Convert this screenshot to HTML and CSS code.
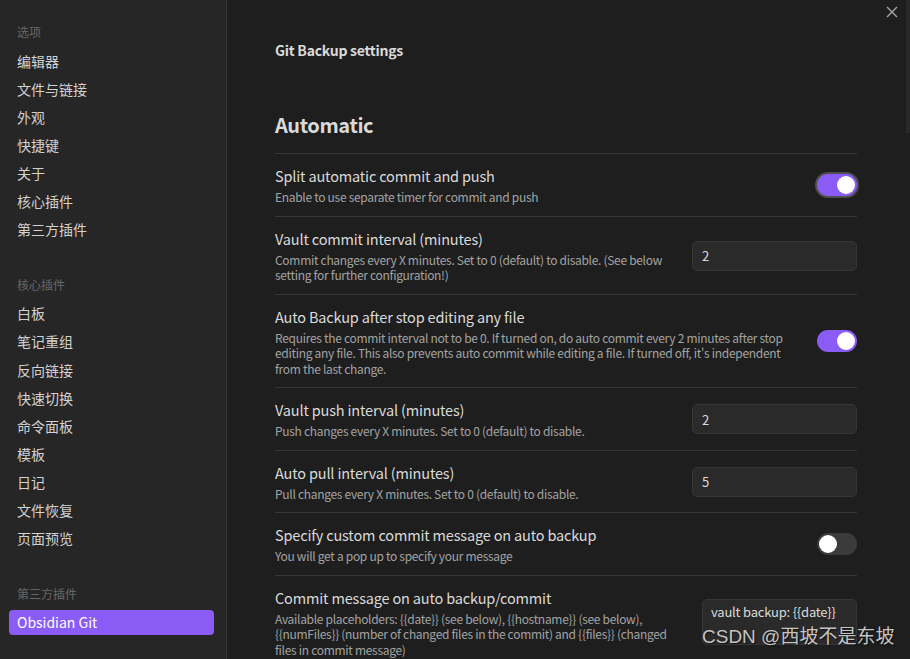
FILE: index.html
```html
<!DOCTYPE html>
<html lang="zh-CN">
<head>
<meta charset="utf-8">
<title>Git Backup settings</title>
<link rel="stylesheet" href="styles.css">
</head>
<body>
<div class="app">
  <nav class="sidebar">
    <div class="nav-group">
      <div class="nav-header">选项</div>
      <div class="nav-item">编辑器</div>
      <div class="nav-item">文件与链接</div>
      <div class="nav-item">外观</div>
      <div class="nav-item">快捷键</div>
      <div class="nav-item">关于</div>
      <div class="nav-item">核心插件</div>
      <div class="nav-item">第三方插件</div>
    </div>
    <div class="nav-group">
      <div class="nav-header">核心插件</div>
      <div class="nav-item">白板</div>
      <div class="nav-item">笔记重组</div>
      <div class="nav-item">反向链接</div>
      <div class="nav-item">快速切换</div>
      <div class="nav-item">命令面板</div>
      <div class="nav-item">模板</div>
      <div class="nav-item">日记</div>
      <div class="nav-item">文件恢复</div>
      <div class="nav-item">页面预览</div>
    </div>
    <div class="nav-group">
      <div class="nav-header">第三方插件</div>
      <div class="nav-item active">Obsidian Git</div>
    </div>
  </nav>

  <main class="main">
    <h2 class="title">Git Backup settings</h2>
    <h3 class="heading">Automatic</h3>

    <div class="item">
      <div class="info">
        <div class="name">Split automatic commit and push</div>
        <div class="desc">Enable to use separate timer for commit and push</div>
      </div>
      <div class="control"><div class="toggle on focus"></div></div>
    </div>

    <div class="item">
      <div class="info">
        <div class="name">Vault commit interval (minutes)</div>
        <div class="desc">Commit changes every X minutes. Set to 0 (default) to disable. (See below setting for further configuration!)</div>
      </div>
      <div class="control"><input class="text-input" type="text" value="2"></div>
    </div>

    <div class="item">
      <div class="info">
        <div class="name">Auto Backup after stop editing any file</div>
        <div class="desc">Requires the commit interval not to be 0. If turned on, do auto commit every 2 minutes after stop editing any file. This also prevents auto commit while editing a file. If turned off, it's independent from the last change.</div>
      </div>
      <div class="control"><div class="toggle on"></div></div>
    </div>

    <div class="item">
      <div class="info">
        <div class="name">Vault push interval (minutes)</div>
        <div class="desc">Push changes every X minutes. Set to 0 (default) to disable.</div>
      </div>
      <div class="control"><input class="text-input" type="text" value="2"></div>
    </div>

    <div class="item">
      <div class="info">
        <div class="name">Auto pull interval (minutes)</div>
        <div class="desc">Pull changes every X minutes. Set to 0 (default) to disable.</div>
      </div>
      <div class="control"><input class="text-input" type="text" value="5"></div>
    </div>

    <div class="item">
      <div class="info">
        <div class="name">Specify custom commit message on auto backup</div>
        <div class="desc">You will get a pop up to specify your message</div>
      </div>
      <div class="control"><div class="toggle"></div></div>
    </div>

    <div class="item">
      <div class="info">
        <div class="name">Commit message on auto backup/commit</div>
        <div class="desc">Available placeholders: {{date}} (see below), {{hostname}} (see below), {{numFiles}} (number of changed files in the commit) and {{files}} (changed files in commit message)</div>
      </div>
      <div class="control"><textarea class="text-area">vault backup: {{date}}</textarea></div>
    </div>

    <button class="close" aria-label="Close">
      <svg width="12" height="12" viewBox="0 0 12 12"><path d="M1 1 L11 11 M11 1 L1 11" stroke="#a6a6a6" stroke-width="1.4" fill="none"/></svg>
    </button>
    <div class="scroll-thumb"></div>
  </main>

  <div class="watermark">CSDN @西坡不是东坡</div>
</div>
</body>
</html>
```

FILE: styles.css
```css
html, body {
  margin: 0;
  padding: 0;
}

body {
  background: #1e1e1e;
  font-family: "Noto Sans CJK SC", "Noto Sans", sans-serif;
  color: #dadada;
  overflow: hidden;
}

.app {
  display: flex;
  height: 659px;
  position: relative;
  overflow: hidden;
}

/* Sidebar */
.sidebar {
  width: 227px;
  flex: none;
  box-sizing: border-box;
  background: #262626;
  border-right: 1px solid #363636;
  padding: 24px 12px 0 9px;
}

.nav-group + .nav-group {
  margin-top: 34.5px;
}

.nav-header {
  font-size: 12px;
  line-height: 16px;
  color: #666666;
  padding-left: 8px;
  margin-bottom: 8.5px;
}

.nav-item {
  font-size: 14px;
  line-height: 25px;
  height: 25px;
  padding: 0 8px;
  margin-bottom: 3.15px;
  color: #d2d2d2;
  border-radius: 4px;
}

.nav-item.active {
  background: #8a5cf5;
  color: #ffffff;
}

/* Main */
.main {
  flex: 1;
  position: relative;
  padding: 40px 53px 0 48px;
  min-width: 0;
}

.title {
  margin: 0;
  font-size: 14px;
  font-weight: 600;
  line-height: 20px;
  letter-spacing: -0.25px;
  color: #dadada;
}

.heading {
  margin: 51px 0 14px;
  font-size: 20px;
  font-weight: 600;
  line-height: 28px;
  letter-spacing: -0.4px;
  color: #dadada;
}

.item {
  display: flex;
  align-items: center;
  border-top: 1px solid #363636;
  padding: 12px 0 11px;
}

.info {
  flex: 1;
  min-width: 0;
  margin-right: 16px;
}

.name {
  font-size: 14.5px;
  line-height: 20px;
  letter-spacing: -0.17px;
  color: #dadada;
}

.desc {
  font-size: 12px;
  line-height: 15.5px;
  letter-spacing: -0.3px;
  color: #a3a3a3;
  margin-top: 3px;
}

.control {
  flex: none;
  display: flex;
  justify-content: flex-end;
}

.toggle {
  position: relative;
  width: 40px;
  height: 22px;
  border-radius: 11px;
  background: #3b3b3b;
}

.toggle::after {
  content: "";
  position: absolute;
  top: 2px;
  left: 2px;
  width: 18px;
  height: 18px;
  border-radius: 50%;
  background: #ffffff;
}

.toggle.on {
  background: #8a5cf5;
}

.toggle.on::after {
  left: 20px;
}

.toggle.focus {
  box-shadow: 0 0 0 2px #4e4e4e;
}

.text-input,
.text-area {
  box-sizing: border-box;
  background: #2a2a2a;
  border: 1px solid #363636;
  border-radius: 5px;
  color: #dadada;
  font-family: "Noto Sans CJK SC", "Noto Sans", sans-serif;
  font-size: 13px;
  letter-spacing: -0.2px;
  outline: none;
  margin: 0;
}

.text-input {
  width: 165px;
  height: 30px;
  padding: 0 9px;
}

.text-area {
  width: 155px;
  height: 46px;
  padding: 3px 8px;
  line-height: 18px;
  resize: none;
  overflow: hidden;
  display: block;
}

.close {
  position: absolute;
  top: 5px;
  right: 11px;
  width: 14px;
  height: 14px;
  padding: 0;
  border: none;
  background: transparent;
  display: flex;
  align-items: center;
  justify-content: center;
}

.scroll-thumb {
  position: absolute;
  top: 0;
  right: 0;
  width: 4px;
  height: 133px;
  background: #292929;
}

.watermark {
  position: absolute;
  left: 702px;
  top: 624px;
  font-family: "Liberation Sans", "Noto Sans CJK SC", sans-serif;
  font-size: 19px;
  line-height: 26px;
  color: #c4c4c4;
  text-shadow: 1px 1px 1px rgba(0, 0, 0, 0.6);
  white-space: nowrap;
}
```
